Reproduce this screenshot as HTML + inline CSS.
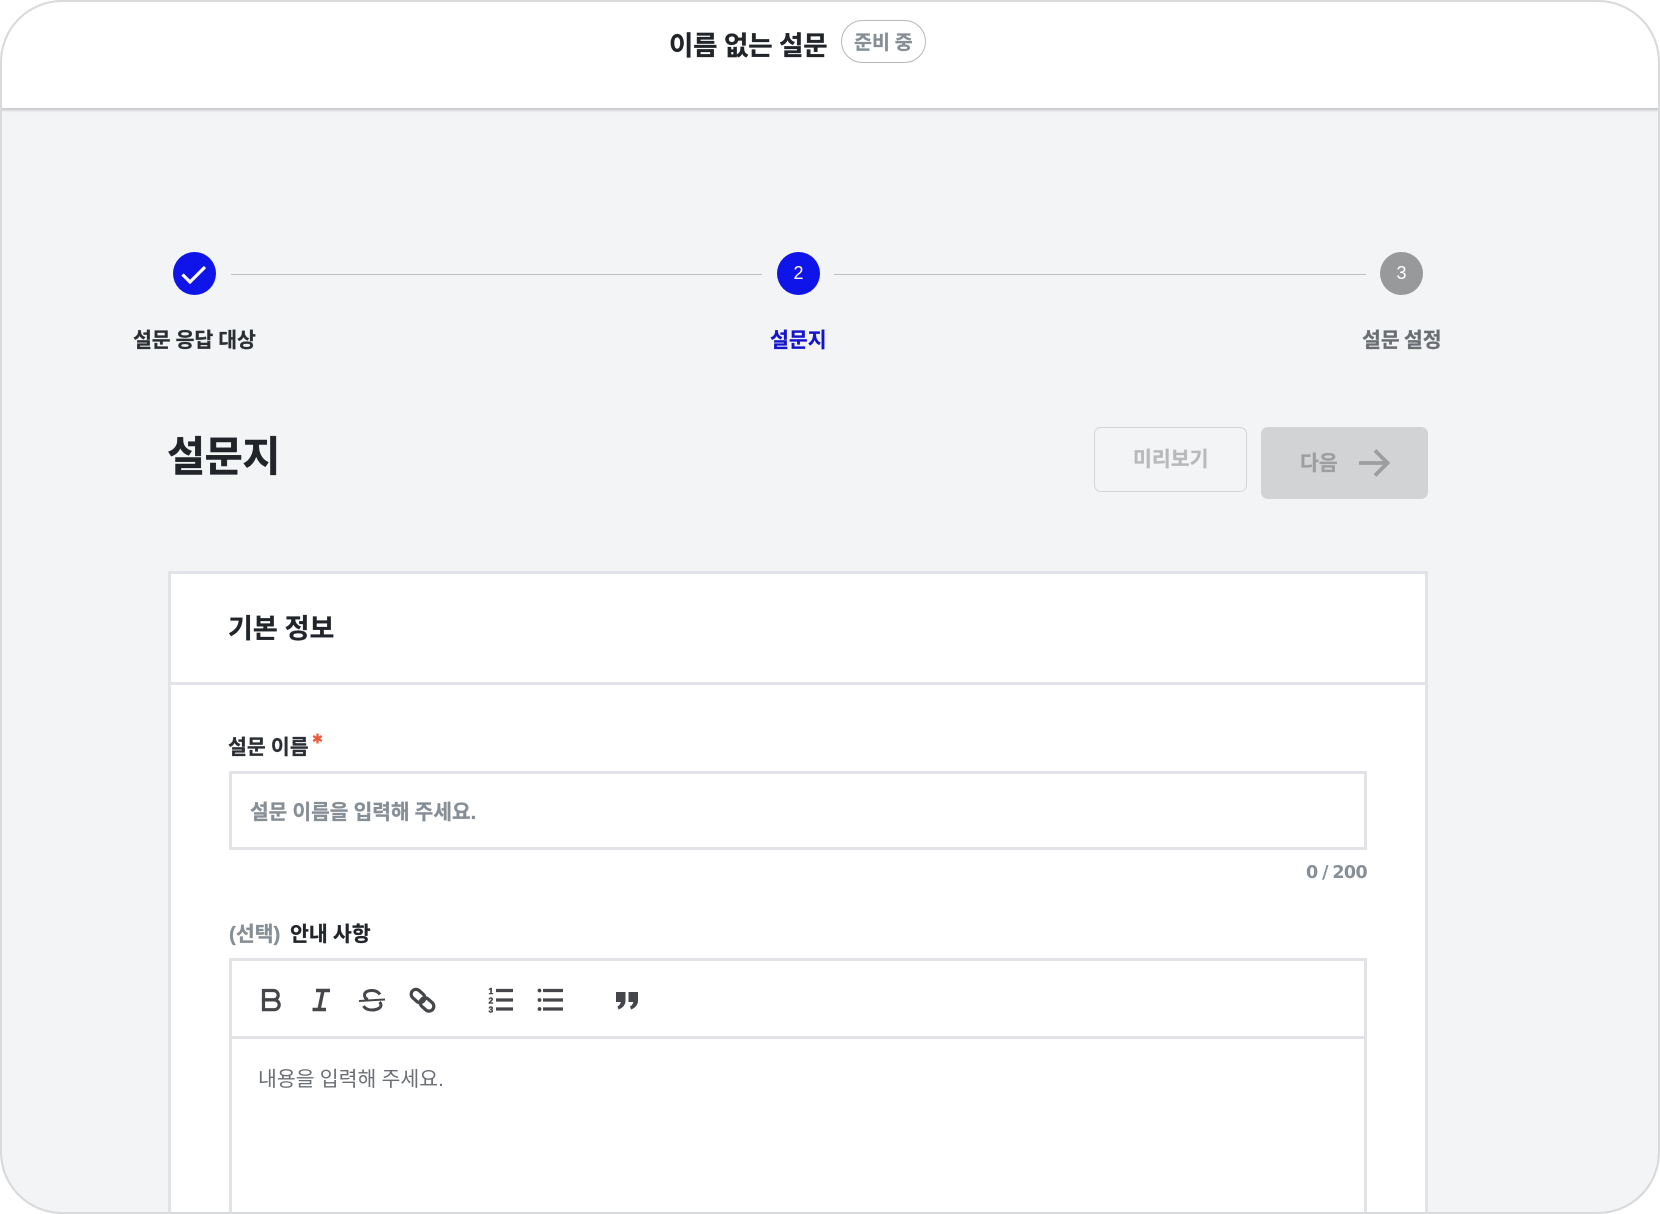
<!DOCTYPE html>
<html lang="ko">
<head>
<meta charset="utf-8">
<title>설문지</title>
<style>
html,body{margin:0;padding:0;background:#fff;width:1660px;height:1214px;overflow:hidden;}
body{font-family:"Liberation Sans","Noto Sans CJK KR",sans-serif;}
.wrap{position:relative;width:1660px;height:1214px;overflow:hidden;}
.frame{position:absolute;left:0;top:0;width:1660px;height:1214px;box-sizing:border-box;border:2px solid #d9dadb;border-radius:62px;background:#f3f4f6;overflow:hidden;}
.header{position:absolute;left:-2px;top:-2px;width:1660px;height:110px;background:#fff;}
.hline{position:absolute;left:0;top:108px;width:1660px;height:2px;background:#cfd0d2;box-shadow:0 1px 2px rgba(0,0,0,.12);}
.t{position:absolute;white-space:nowrap;font-family:"Liberation Sans","Noto Sans CJK KR",sans-serif;word-spacing:-.5px;}
.b{font-weight:700;-webkit-text-stroke:.25px currentColor;}
.abs{position:absolute;box-sizing:border-box;}
.circle{position:absolute;width:43px;height:43px;border-radius:50%;top:252px;color:#fff;text-align:center;line-height:43px;font-size:18px;font-family:"Liberation Sans",sans-serif;}
.line{position:absolute;height:1px;top:274px;background:#bfc1c4;}
</style>
</head>
<body>
<div class="wrap">
<div class="frame">
  <div class="header"></div>
</div>
<div class="hline"></div>

<div class="t b" style="left:669px;top:26px;line-height:40px;font-size:26.5px;color:#212529;letter-spacing:-.2px;">이름 없는 설문</div>
<div class="abs" style="left:841px;top:20px;width:85px;height:43px;border:1.5px solid #b5b7ba;border-radius:22px;background:#fff;"></div>
<div class="t b" style="left:854px;top:28px;line-height:30px;font-size:19.5px;color:#868e96;">준비 중</div>

<div class="circle" style="left:173px;background:#0f14e8;">
  <svg width="43" height="43" viewBox="0 0 43 43" style="display:block"><path d="M9.5 22.500 L17 30 L32 15" fill="none" stroke="#fff" stroke-width="3.200" stroke-linejoin="miter"/></svg>
</div>
<div class="line" style="left:231px;width:531px;"></div>
<div class="circle" style="left:777px;background:#0f14e8;">2</div>
<div class="line" style="left:834px;width:532px;"></div>
<div class="circle" style="left:1380px;background:#98999b;">3</div>

<div class="t b" style="left:133px;top:326px;line-height:30px;font-size:20.5px;color:#2b2f33;letter-spacing:-.1px;">설문 응답 대상</div>
<div class="t b" style="left:770px;top:326px;line-height:30px;font-size:20.5px;color:#1414cc;">설문지</div>
<div class="t b" style="left:1362px;top:326px;line-height:30px;font-size:20.5px;color:#6a6e72;word-spacing:-1.5px;">설문 설정</div>

<div class="t b" style="left:167px;top:427px;line-height:60px;font-size:41.5px;color:#212529;letter-spacing:-.5px;-webkit-text-stroke:.4px #212529;">설문지</div>

<div class="abs" style="left:1094px;top:427px;width:153px;height:65px;border:1.5px solid #d5d6d8;border-radius:7px;"></div>
<div class="t b" style="left:1133px;top:445px;line-height:30px;font-size:20.5px;color:#b8b9bb;">미리보기</div>
<div class="abs" style="left:1261px;top:427px;width:167px;height:72px;background:#d1d3d5;border-radius:7px;"></div>
<div class="t b" style="left:1300px;top:449px;line-height:30px;font-size:20.5px;color:#9d9ea0;">다음</div>
<svg class="abs" style="left:1355px;top:445px" width="38" height="36" viewBox="0 0 38 36"><path d="M4 18 H32 M20 5.500 L32.500 18 L20 30.500" fill="none" stroke="#9d9ea0" stroke-width="3.800"/></svg>

<div class="abs" style="left:168px;top:571px;width:1260px;height:643px;background:#fff;border:3px solid #e1e3e7;border-bottom:0;"></div>
<div class="abs" style="left:171px;top:682px;width:1254px;height:3px;background:#e1e3e7;"></div>
<div class="t b" style="left:228px;top:609px;line-height:40px;font-size:27px;color:#212529;">기본 정보</div>

<div class="t b" style="left:228px;top:733px;line-height:30px;font-size:20.5px;color:#2b2f33;">설문 이름</div>
<svg class="abs" style="left:312px;top:733px" width="11" height="11" viewBox="0 0 11 11"><path d="M5.500 .5 V10.500 M1.200 3 L9.800 8 M9.800 3 L1.200 8" stroke="#f0583c" stroke-width="2.200" fill="none"/></svg>

<div class="abs" style="left:229px;top:771px;width:1138px;height:79px;background:#fff;border:3px solid #e1e3e7;"></div>
<div class="t b" style="left:250px;top:798px;line-height:30px;font-size:20.3px;color:#868e96;">설문 이름을 입력해 주세요.</div>

<div class="t" style="left:1306px;top:859px;line-height:28px;font-size:17.5px;font-weight:700;color:#868e96;font-family:'DejaVu Sans',sans-serif;letter-spacing:-.6px;word-spacing:-1px;">0 / 200</div>

<div class="t b" style="left:229px;top:920px;line-height:30px;font-size:20.5px;color:#868e96;">(선택)</div>
<div class="t b" style="left:290px;top:920px;line-height:30px;font-size:20.5px;color:#212529;">안내 사항</div>

<div class="abs" style="left:229px;top:958px;width:1138px;height:256px;background:#fff;border:3px solid #e1e3e7;border-bottom:0;"></div>
<div class="abs" style="left:232px;top:1036px;width:1132px;height:3px;background:#e1e3e7;"></div>

<svg class="abs" style="left:255px;top:980px" width="400" height="40" viewBox="255 980 400 40">
  <g fill="none" stroke="#444649" stroke-width="3.200">
    <!-- B -->
    <path d="M263.500 990.500 H273.500 a4.700 4.700 0 0 1 0 9.400 H263.500 Z"/>
    <path d="M263.500 999.900 H274.300 a4.900 4.900 0 0 1 0 9.800 H263.500 Z"/>
    <!-- I -->
    <path d="M316 990.500 H330 M312.500 1009.500 H326 M323 990.500 L319 1009.500" stroke-width="3.400"/>
    <!-- S -->
    <path d="M380 994.500 C378 991.500 375 990.500 372 990.500 C367 990.500 364.500 992.500 364.500 995 C364.500 997.500 366 999 368 999.500" stroke-width="3"/>
    <path d="M379.500 1002 C380.500 1003 381 1004 381 1005 C381 1008 377 1010 372 1010 C368 1010 365 1008.500 363.500 1006" stroke-width="3"/>
    <path d="M359 1001 L385 999.500" stroke-width="2"/>
    <!-- link -->
    <rect x="-7.500" y="-4.800" width="15" height="9.600" rx="4.800" transform="translate(418 996) rotate(42)" stroke-width="3.200"/>
    <rect x="-7.500" y="-4.800" width="15" height="9.600" rx="4.800" transform="translate(427 1004.500) rotate(42)" stroke-width="3.200"/>
    <!-- ol lines -->
    <path d="M496 990.500 H513 M496 1000 H513 M496 1009 H513" stroke-width="3.200"/>
    <!-- ul -->
    <path d="M543 990.500 H563 M543 1000 H563 M543 1009 H563" stroke-width="3.200"/>
  </g>
  <g fill="#444649">
    <circle cx="539.500" cy="990.500" r="1.900"/><circle cx="539.500" cy="1000" r="1.900"/><circle cx="539.500" cy="1009" r="1.900"/>
    <path d="M616 992 H625.500 V1001 C625.500 1005 622.500 1008 618.500 1009.500 L617.500 1006.500 C619.500 1005.500 620.500 1003.800 620.800 1002 H616 Z"/>
    <path d="M628.500 992 H638 V1001 C638 1005 635 1008 631 1009.500 L630 1006.500 C632 1005.500 633 1003.800 633.300 1002 H628.500 Z"/>
    <g font-size="8.500" font-weight="700" font-family="'Liberation Sans',sans-serif" stroke="#444649" stroke-width=".4">
    <text x="488.500" y="994">1</text>
    <text x="488.500" y="1003.500">2</text>
    <text x="488.500" y="1012.500">3</text>
    </g>
  </g>
</svg>

<div class="t" style="left:258px;top:1065px;line-height:30px;font-size:20.5px;font-weight:400;color:#6b6f74;">내용을 입력해 주세요.</div>

<svg class="abs" style="left:0;top:0;pointer-events:none" width="1660" height="1214" viewBox="0 0 1660 1214">
  <path d="M62 0 H0 V62 A62 62 0 0 1 62 0Z M1598 0 H1660 V62 A62 62 0 0 0 1598 0Z M0 1152 V1214 H62 A62 62 0 0 1 0 1152Z M1660 1152 V1214 H1598 A62 62 0 0 0 1660 1152Z" fill="#fff"/>
  <rect x="1" y="1" width="1658" height="1212" rx="61" ry="61" fill="none" stroke="#d9dadb" stroke-width="2"/>
</svg>
</div>
</body>
</html>
